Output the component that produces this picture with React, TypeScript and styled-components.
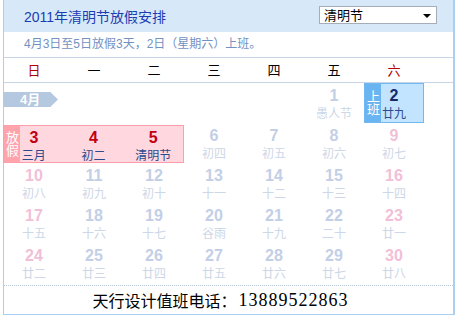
import styled, { createGlobalStyle } from 'styled-components';

const GlobalStyle = createGlobalStyle`
  body {
    margin: 0;
    background: #fff;
    font-family: 'Noto Sans CJK SC', 'Liberation Sans', sans-serif;
  }
`;

const CJK = "'Noto Sans CJK SC', 'Liberation Sans', sans-serif";
const NUM = "'Liberation Sans', Arial, sans-serif";

type DayKind = 'weekday' | 'weekend';

interface Day {
  date: number;
  lunar: string;
  kind: DayKind;
}

const Box = styled.div`
  margin-left: 3px;
  width: 449px;
  border-left: 1px solid #a9cff2;
  border-right: 2px solid #a9cff2;
  border-bottom: 1px solid #a9cff2;
  font-family: ${CJK};
`;

const Header = styled.div`
  height: 32px;
  background: #d7e9f9;
  display: flex;
  align-items: center;
  justify-content: space-between;
  padding: 0 16px 0 20px;
`;

const Title = styled.h1`
  margin: 0;
  font-size: 14px;
  font-weight: normal;
  color: #1c3db2;
  font-family: ${NUM}, 'Noto Sans CJK SC', sans-serif;
`;

const SelectBox = styled.div`
  position: relative;
  width: 112px;
  height: 16px;
  margin-top: -2px;
  border: 1px solid #a5adb8;
  background: #fff;
  font-size: 13px;
  line-height: 16px;
  padding-left: 4px;
  box-sizing: content-box;
  color: #000;
  cursor: pointer;

  &::after {
    content: '';
    position: absolute;
    right: 5px;
    top: 7px;
    border-left: 4px solid transparent;
    border-right: 4px solid transparent;
    border-top: 4px solid #000;
  }
`;

const Notice = styled.div`
  height: 25px;
  line-height: 25px;
  padding-left: 20px;
  font-size: 12px;
  color: #7391c2;
  border-bottom: 1px solid #c7d5e6;
  font-family: ${NUM}, 'Noto Sans CJK SC', sans-serif;
`;

const WeekRow = styled.div`
  display: grid;
  grid-template-columns: repeat(7, 60px);
  height: 24px;
  border-bottom: 1px solid #c7d5e6;
`;

const WeekLabel = styled.div<{ $red?: boolean }>`
  text-align: center;
  line-height: 24px;
  font-size: 13px;
  color: ${(p) => (p.$red ? '#b00000' : '#000')};
`;

const Grid = styled.div`
  display: grid;
  grid-template-columns: repeat(7, 60px);
  grid-auto-rows: 40px;
  padding-bottom: 2px;
  border-bottom: 1px dotted #b9c8d8;
`;

const Cell = styled.div`
  display: flex;
  flex-direction: column;
  align-items: center;
  padding-top: 4px;
  box-sizing: border-box;
`;

const Num = styled.span<{ $color: string }>`
  font-family: ${NUM};
  font-weight: bold;
  font-size: 16px;
  line-height: 18px;
  color: ${(p) => p.$color};
`;

const Lunar = styled.span<{ $color: string }>`
  font-size: 12px;
  line-height: 15px;
  color: ${(p) => p.$color};
`;

const Ribbon = styled.div`
  align-self: flex-start;
  margin: 5px 0 0 -1px;
  width: 55px;
  height: 15px;
  background: #b4c8e0;
  clip-path: polygon(0 0, 86% 0, 100% 50%, 86% 100%, 0 100%);
  color: #fff;
  font-weight: bold;
  font-size: 13px;
  line-height: 15px;
  padding-left: 17px;
  box-sizing: border-box;
  font-family: ${NUM}, 'Noto Sans CJK SC', sans-serif;
`;

const Band = styled.div<{ $span: number; $bg: string; $line: string }>`
  position: relative;
  grid-column: span ${(p) => p.$span};
  display: grid;
  grid-template-columns: repeat(${(p) => p.$span}, 1fr);
  background: ${(p) => p.$bg};
  border: 1px solid ${(p) => p.$line};
  box-sizing: border-box;
`;

const HolidayBand = styled(Band)`
  margin: 2px 0 0 -1px;
`;

// 竖排标签，盖在格子左边
const Tag = styled.div<{ $bg: string }>`
  position: absolute;
  left: 0;
  top: 0;
  bottom: 0;
  width: 16px;
  background: ${(p) => p.$bg};
  color: #fff;
  font-size: 13px;
  display: flex;
  align-items: center;
  justify-content: center;

  span {
    writing-mode: vertical-rl;
    text-orientation: upright;
    line-height: 16px;
    letter-spacing: 0;
  }
`;

const BandCell = styled(Cell)`
  padding-top: 3px;
`;

const Footer = styled.div`
  height: 28px;
  display: flex;
  align-items: center;
  justify-content: center;
  padding-right: 16px;
  font-size: 16px;
  color: #000;
`;

const Phone = styled.span`
  font-family: Georgia, 'Liberation Serif', serif;
  font-size: 18px;
  letter-spacing: 1px;
  margin-left: 2px;
`;

const weekNames = ['日', '一', '二', '三', '四', '五', '六'];

const FADED_NUM = '#c3cfe6';
const FADED_PINK = '#f1bfd7';
const FADED_LUNAR = '#ccd7e7';

const rows: Day[][] = [
  [
    { date: 6, lunar: '初四', kind: 'weekday' },
    { date: 7, lunar: '初五', kind: 'weekday' },
    { date: 8, lunar: '初六', kind: 'weekday' },
    { date: 9, lunar: '初七', kind: 'weekend' },
  ],
  [
    { date: 10, lunar: '初八', kind: 'weekend' },
    { date: 11, lunar: '初九', kind: 'weekday' },
    { date: 12, lunar: '初十', kind: 'weekday' },
    { date: 13, lunar: '十一', kind: 'weekday' },
    { date: 14, lunar: '十二', kind: 'weekday' },
    { date: 15, lunar: '十三', kind: 'weekday' },
    { date: 16, lunar: '十四', kind: 'weekend' },
  ],
  [
    { date: 17, lunar: '十五', kind: 'weekend' },
    { date: 18, lunar: '十六', kind: 'weekday' },
    { date: 19, lunar: '十七', kind: 'weekday' },
    { date: 20, lunar: '谷雨', kind: 'weekday' },
    { date: 21, lunar: '十九', kind: 'weekday' },
    { date: 22, lunar: '二十', kind: 'weekday' },
    { date: 23, lunar: '廿一', kind: 'weekend' },
  ],
  [
    { date: 24, lunar: '廿二', kind: 'weekend' },
    { date: 25, lunar: '廿三', kind: 'weekday' },
    { date: 26, lunar: '廿四', kind: 'weekday' },
    { date: 27, lunar: '廿五', kind: 'weekday' },
    { date: 28, lunar: '廿六', kind: 'weekday' },
    { date: 29, lunar: '廿七', kind: 'weekday' },
    { date: 30, lunar: '廿八', kind: 'weekend' },
  ],
];

const holidays = [
  { date: 3, lunar: '三月' },
  { date: 4, lunar: '初二' },
  { date: 5, lunar: '清明节' },
];

const FadedDay = ({ day }: { day: Day }) => (
  <Cell>
    <Num $color={day.kind === 'weekend' ? FADED_PINK : FADED_NUM}>{day.date}</Num>
    <Lunar $color={FADED_LUNAR}>{day.lunar}</Lunar>
  </Cell>
);

const App = () => (
  <>
    <GlobalStyle />
    <Box>
      <Header>
        <Title>2011年清明节放假安排</Title>
        <SelectBox>清明节</SelectBox>
      </Header>
      <Notice>4月3日至5日放假3天，2日（星期六）上班。</Notice>
      <WeekRow>
        {weekNames.map((w, i) => (
          <WeekLabel key={w} $red={i === 0 || i === 6}>
            {w}
          </WeekLabel>
        ))}
      </WeekRow>
      <Grid>
        {/* 第一行 */}
        <Cell>
          <Ribbon>4月</Ribbon>
        </Cell>
        <Cell />
        <Cell />
        <Cell />
        <Cell />
        <FadedDay day={{ date: 1, lunar: '愚人节', kind: 'weekday' }} />
        <Band $span={1} $bg="#c3e4fe" $line="#72b9f2">
          <Tag $bg="#6ab4f1">
            <span>上班</span>
          </Tag>
          <BandCell>
            <Num $color="#13296b">2</Num>
            <Lunar $color="#2e4c92">廿九</Lunar>
          </BandCell>
        </Band>

        {/* 放假 */}
        <HolidayBand $span={3} $bg="#ffd7df" $line="#ff9ea8">
          <Tag $bg="#ffa3ad">
            <span>放假</span>
          </Tag>
          {holidays.map((h) => (
            <BandCell key={h.date}>
              <Num $color="#c00010">{h.date}</Num>
              <Lunar $color="#2a4a8c">{h.lunar}</Lunar>
            </BandCell>
          ))}
        </HolidayBand>
        {rows.map((r) => r.map((d) => <FadedDay key={d.date} day={d} />))}
      </Grid>
      <Footer>
        天行设计值班电话：<Phone>13889522863</Phone>
      </Footer>
    </Box>
  </>
);

export default App;
